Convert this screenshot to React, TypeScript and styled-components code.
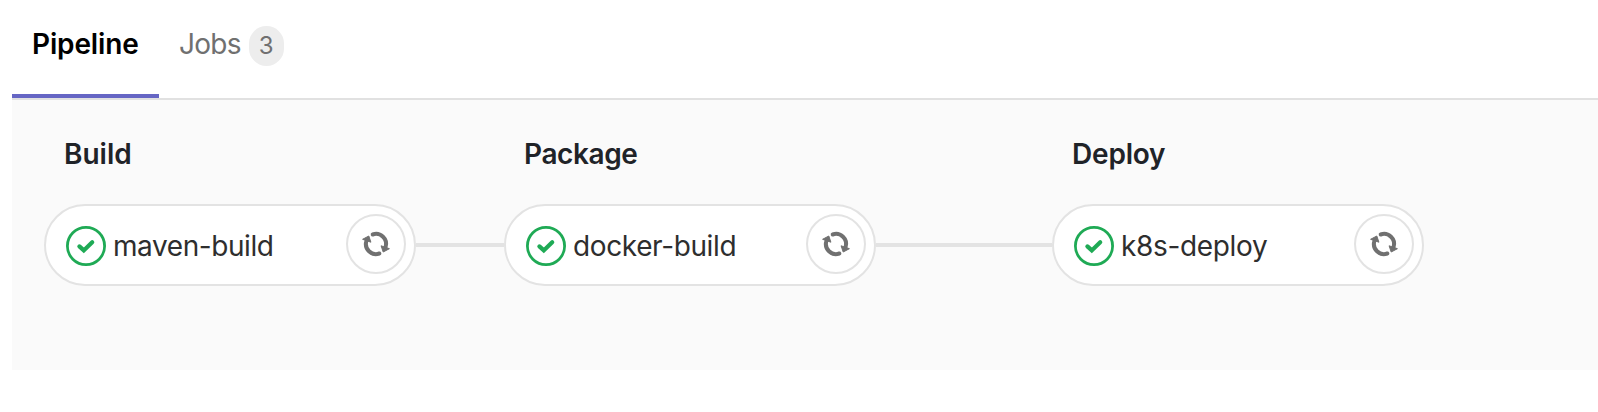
import React from "react";
import styled, { createGlobalStyle } from "styled-components";

const GlobalStyle = createGlobalStyle`
  body {
    margin: 0;
    background: #ffffff;
    font-family: Inter, "Liberation Sans", sans-serif;
    font-size: 28px;
    line-height: 40px;
    overflow: hidden;
  }
  * {
    box-sizing: border-box;
  }
`;

const Page = styled.main`
  min-height: 412px;
  padding-left: 12px;
`;

const Tabs = styled.nav`
  display: flex;
  height: 100px;
  border-bottom: 2px solid #e1e1e1;
`;

const Tab = styled.a<{ $active?: boolean; $width: number }>`
  display: flex;
  align-items: flex-start;
  width: ${(p) => p.$width}px;
  height: 98px;
  padding: 24px 0 0 20px;
  white-space: nowrap;
  border-bottom: ${(p) => (p.$active ? "4px solid #6666c4" : "none")};
  color: ${(p) => (p.$active ? "#000000" : "#707070")};
  font-weight: ${(p) => (p.$active ? 600 : 400)};
`;

const Label = styled.span<{ $tracking: number }>`
  letter-spacing: ${(p) => p.$tracking}px;
  white-space: nowrap;
`;

const Badge = styled.span`
  width: 35px;
  height: 40px;
  margin: 2px 0 0 8px;
  border-radius: 18px;
  background: #ededed;
  color: #707070;
  font-size: 24px;
  line-height: 40px;
  text-align: center;
`;

const Graph = styled.section`
  display: flex;
  height: 270px;
  padding: 34px 0 0 32px;
  background: #fafafa;
`;

const Stage = styled.div`
  flex: none;
  width: 372px;
`;

const StageName = styled.h2`
  margin: 0 0 30px;
  padding-left: 20px;
  color: #1f2328;
  font-size: 28px;
  font-weight: 600;
  line-height: 40px;
`;

const Job = styled.div`
  display: flex;
  align-items: center;
  height: 82px;
  padding: 0 8px 0 20px;
  border: 2px solid #e3e3e3;
  border-radius: 41px;
  background: #ffffff;
  color: #2e2e2e;
`;

const JobName = styled.span`
  flex: 1;
  padding: 2px 0 0 7px;
`;

const StatusIcon = styled.svg`
  flex: none;
  width: 40px;
  height: 40px;
  margin-top: 2px;
`;

const RetryButton = styled.button`
  display: flex;
  align-items: center;
  justify-content: center;
  width: 60px;
  height: 60px;
  margin-bottom: 2px;
  padding: 0;
  border: 2px solid #e3e3e3;
  border-radius: 50%;
  background: #ffffff;
`;

const Connector = styled.div<{ $length: number }>`
  flex: none;
  width: ${(p) => p.$length}px;
  height: 4px;
  margin-top: 109px;
  background: #e3e3e3;
`;

function SuccessIcon() {
  return (
    <StatusIcon viewBox="-20 -20 40 40" fill="none" stroke="#1faa55">
      <circle r="18.6" strokeWidth="2.8" />
      <path d="M-6.6 0.4L-2.2 4.4L6.2 -3.7" strokeWidth="4.2" strokeLinecap="round" />
    </StatusIcon>
  );
}

function RetryIcon() {
  return (
    <svg width="32" height="32" viewBox="-16 -16 32 32" fill="none">
      {[0, 180].map((angle) => (
        <g key={angle} transform={`rotate(${angle})`}>
          <path d="M-3.3 -9.5A10.06 10.06 0 0 1 9.6 3" stroke="#707070" strokeWidth="4" strokeLinecap="round" />
          <path d="M5.1 1.8L13.4 4.7L7.2 8Z" fill="#707070" stroke="#707070" strokeWidth="1" strokeLinejoin="round" />
        </g>
      ))}
    </svg>
  );
}

type StageData = {
  name: string;
  tracking: number;
  job: string;
  jobTracking: number;
  link?: number;
};

const stages: StageData[] = [
  { name: "Build", tracking: 0, job: "maven-build", jobTracking: -0.42, link: 88 },
  { name: "Package", tracking: -0.4, job: "docker-build", jobTracking: -0.38, link: 176 },
  { name: "Deploy", tracking: -0.2, job: "k8s-deploy", jobTracking: -0.34 },
];

export default function App() {
  return (
    <Page>
      <GlobalStyle />
      <Tabs>
        <Tab $active $width={147}>
          <Label $tracking={-0.15}>Pipeline</Label>
        </Tab>
        <Tab $width={140}>
          <Label $tracking={-0.75}>Jobs</Label>
          <Badge>3</Badge>
        </Tab>
      </Tabs>
      <Graph>
        {stages.map((stage) => (
          <React.Fragment key={stage.name}>
            <Stage>
              <StageName>
                <Label $tracking={stage.tracking}>{stage.name}</Label>
              </StageName>
              <Job>
                <SuccessIcon />
                <JobName>
                  <Label $tracking={stage.jobTracking}>{stage.job}</Label>
                </JobName>
                <RetryButton aria-label="Retry">
                  <RetryIcon />
                </RetryButton>
              </Job>
            </Stage>
            {stage.link && <Connector $length={stage.link} />}
          </React.Fragment>
        ))}
      </Graph>
    </Page>
  );
}
